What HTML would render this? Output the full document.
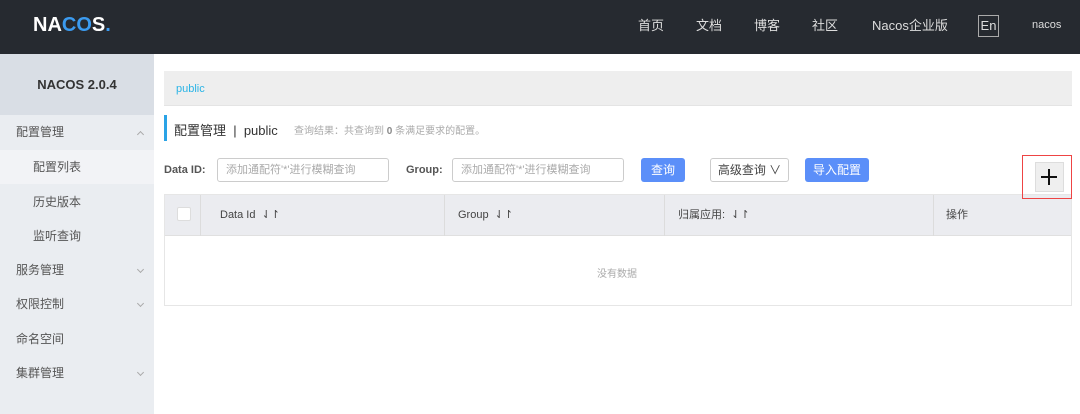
<!DOCTYPE html>
<html><head><meta charset="utf-8"><style>
*{margin:0;padding:0;box-sizing:border-box}
body{width:1080px;height:414px;overflow:hidden;background:#fff;font-family:"Liberation Sans","Noto Sans CJK SC",sans-serif;font-size:12px;color:#333;position:relative}
.a{position:absolute}
.hdr{left:0;top:0;width:1080px;height:54px;background:#262a30}
.nav{color:#ddd;font-size:13px;top:15px}
.side{left:0;top:54px;width:154px;height:360px;background:#eaedf1}
.mi{left:0;width:154px;height:34px;line-height:34px;padding-left:16px;color:#555;font-size:12px}
.sub{padding-left:33px}
.chev{position:absolute;right:11px;top:14px;width:5px;height:5px;border-right:1px solid #aaa;border-bottom:1px solid #aaa;transform:rotate(45deg)}
.up{transform:rotate(-135deg);top:17px}
.inp{height:24px;border:1px solid #ccc;border-radius:3px;color:#aaa;font-size:11px;line-height:22px;padding-left:8px}
.btn{height:24px;border-radius:3px;background:#5b8ff9;color:#fff;line-height:24px;text-align:center;font-size:12px}
.th{top:195px;height:41px;line-height:41px;color:#444;font-size:11px}
</style></head><body>
<div class="a hdr"></div>
<div class="a" style="left:33px;top:14px;font-size:20px;font-weight:bold;color:#fff">NA<span style="color:#3b9bf0">CO</span>S<span style="color:#3b9bf0">.</span></div>
<div class="a nav" style="left:638px">首页</div>
<div class="a nav" style="left:696px">文档</div>
<div class="a nav" style="left:754px">博客</div>
<div class="a nav" style="left:812px">社区</div>
<div class="a nav" style="left:872px">Nacos企业版</div>
<div class="a" style="left:978px;top:15px;width:21px;height:22px;border:1px solid #aaa;color:#ddd;font-size:13px;text-align:center;line-height:20px">En</div>
<div class="a" style="left:1032px;top:19px;color:#ddd;font-size:11px">nacos</div>

<div class="a side"></div>
<div class="a" style="left:0;top:54px;width:154px;height:61px;background:#d9dee5;text-align:center;line-height:61px;font-weight:bold;font-size:13px;color:#333">NACOS 2.0.4</div>
<div class="a mi" style="top:115px">配置管理<span class="chev up"></span></div>
<div class="a mi sub" style="top:150px;background:#f2f3f6">配置列表</div>
<div class="a mi sub" style="top:185px">历史版本</div>
<div class="a mi sub" style="top:219px">监听查询</div>
<div class="a mi" style="top:253px">服务管理<span class="chev"></span></div>
<div class="a mi" style="top:287px">权限控制<span class="chev"></span></div>
<div class="a mi" style="top:322px">命名空间</div>
<div class="a mi" style="top:356px">集群管理<span class="chev"></span></div>

<div class="a" style="left:164px;top:71px;width:908px;height:35px;background:#eeeeee;border-bottom:1px solid #e4e4e4"></div>
<div class="a" style="left:176px;top:83px;color:#2ab4e6;font-size:11px">public</div>
<div class="a" style="left:164px;top:115px;width:3px;height:26px;background:#2aa3e6"></div>
<div class="a" style="left:174px;top:120px;font-size:13px;color:#333">配置管理 &nbsp;|&nbsp; public</div>
<div class="a" style="left:294px;top:122px;font-size:10px;color:#aaa">查询结果：共查询到 <b style="color:#888">0</b> 条满足要求的配置。</div>

<div class="a" style="left:164px;top:164px;font-weight:bold;font-size:11px;color:#555">Data ID:</div>
<div class="a inp" style="left:217px;top:158px;width:172px">添加通配符'*'进行模糊查询</div>
<div class="a" style="left:406px;top:164px;font-weight:bold;font-size:11px;color:#555">Group:</div>
<div class="a inp" style="left:452px;top:158px;width:172px">添加通配符'*'进行模糊查询</div>
<div class="a btn" style="left:641px;top:158px;width:44px">查询</div>
<div class="a" style="left:710px;top:158px;width:79px;height:24px;border:1px solid #ccc;border-radius:3px;text-align:center;line-height:22px;color:#444">高级查询 ∨</div>
<div class="a btn" style="left:805px;top:158px;width:64px">导入配置</div>

<div class="a" style="left:164px;top:194px;width:908px;height:112px;border:1px solid #e6e6e6"></div>
<div class="a" style="left:165px;top:195px;width:906px;height:41px;background:#ebecf0;border-bottom:1px solid #e0e0e0"></div>
<div class="a" style="left:177px;top:207px;width:14px;height:14px;background:#fff;border:1px solid #ddd;border-radius:2px"></div>
<div class="a" style="left:200px;top:195px;width:1px;height:41px;background:#dcdcdc"></div>
<div class="a" style="left:444px;top:195px;width:1px;height:41px;background:#dcdcdc"></div>
<div class="a" style="left:664px;top:195px;width:1px;height:41px;background:#dcdcdc"></div>
<div class="a" style="left:933px;top:195px;width:1px;height:41px;background:#dcdcdc"></div>
<div class="a th" style="left:220px">Data Id &nbsp;⇃↾</div>
<div class="a th" style="left:458px">Group &nbsp;⇃↾</div>
<div class="a th" style="left:678px">归属应用: &nbsp;⇃↾</div>
<div class="a th" style="left:946px">操作</div>
<div class="a" style="left:597px;top:265px;color:#aaa;font-size:10px">没有数据</div>

<div class="a" style="left:1022px;top:155px;width:50px;height:44px;border:1px solid #e44"></div>
<div class="a" style="left:1035px;top:162px;width:29px;height:30px;background:#efefef;border:1px solid #ddd"></div>
<div class="a" style="left:1041px;top:176px;width:16px;height:2px;background:#111"></div>
<div class="a" style="left:1048px;top:169px;width:2px;height:16px;background:#111"></div>
</body></html>
